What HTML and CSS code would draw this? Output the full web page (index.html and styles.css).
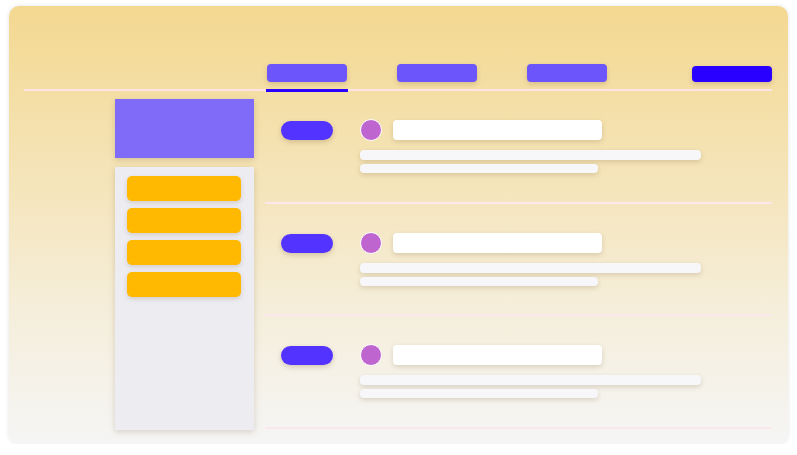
FILE: index.html
```html
<!DOCTYPE html>
<html lang="en">
<head>
    <meta charset="UTF-8">
    <meta name="viewport" content="width=device-width, initial-scale=1.0">
    <title>Feed Wireframe</title>
    <link rel="stylesheet" href="styles.css">
</head>
<body>

    <div class="card">

        <!-- Top navigation -->
        <div class="topbar">
            <div class="tab active"><span class="tab-bar"></span></div>
            <div class="tab"><span class="tab-bar"></span></div>
            <div class="tab"><span class="tab-bar"></span></div>
            <div class="action-btn"></div>
        </div>

        <div class="layout">

            <!-- Sidebar -->
            <div class="sidebar">
                <div class="sidebar-head"></div>
                <div class="sidebar-panel">
                    <div class="menu-item"></div>
                    <div class="menu-item"></div>
                    <div class="menu-item"></div>
                    <div class="menu-item"></div>
                </div>
            </div>

            <!-- Feed rows -->
            <div class="feed">
                <div class="row">
                    <div class="entry">
                        <div class="pill"></div>
                        <div class="post">
                            <div class="post-head">
                                <span class="avatar"></span>
                                <span class="title"></span>
                            </div>
                            <div class="line long"></div>
                            <div class="line short"></div>
                        </div>
                    </div>
                </div>
                <div class="row">
                    <div class="entry">
                        <div class="pill"></div>
                        <div class="post">
                            <div class="post-head">
                                <span class="avatar"></span>
                                <span class="title"></span>
                            </div>
                            <div class="line long"></div>
                            <div class="line short"></div>
                        </div>
                    </div>
                </div>
                <div class="row">
                    <div class="entry">
                        <div class="pill"></div>
                        <div class="post">
                            <div class="post-head">
                                <span class="avatar"></span>
                                <span class="title"></span>
                            </div>
                            <div class="line long"></div>
                            <div class="line short"></div>
                        </div>
                    </div>
                </div>
            </div>

        </div>
    </div>

</body>
</html>
```

FILE: styles.css
```css
* {
    box-sizing: border-box;
}
body {
    margin: 0;
    background: #ffffff;
    font-family: "Liberation Sans", Arial, sans-serif;
}
.card {
    margin: 6px 0 0 9px;
    width: 779px;
    height: 438px;
    padding: 0 16px 0 15px;
    border-radius: 10px;
    background: linear-gradient(180deg, #f3d890 0%, #f5e6bf 45%, #f5eedb 70%, #f5f5f5 100%);
    box-shadow: 0 0 4px rgba(0, 0, 0, 0.12);
    overflow: hidden;
}

/* top navigation */
.topbar {
    display: flex;
    align-items: flex-end;
    height: 85px;
    padding-left: 242px;
    border-bottom: 2px solid #fbe4e4;
}
.tab {
    width: 82px;
    padding: 0 1px 7px;
    margin-right: 48px;
}
.tab.active {
    border-bottom: 3px solid #2a00ff;
    margin-bottom: -3px;
}
.tab-bar {
    display: block;
    height: 18px;
    background: #6c56fb;
    border-radius: 4px;
    box-shadow: 0 2px 5px rgba(110, 80, 40, 0.22);
}
.action-btn {
    margin-left: auto;
    margin-bottom: 7px;
    width: 80px;
    height: 16px;
    background: #2900ff;
    border-radius: 4px;
    box-shadow: 0 2px 5px rgba(110, 80, 40, 0.22);
}

.layout {
    display: flex;
    gap: 11px;
}

/* sidebar */
.sidebar {
    width: 139px;
    margin-left: 91px;
    margin-top: 8px;
}
.sidebar-head {
    height: 59px;
    background: #7f6bf8;
    box-shadow: 0 2px 6px rgba(110, 80, 40, 0.22);
}
.sidebar-panel {
    margin-top: 9px;
    height: 263px;
    padding: 9px 13px 0 12px;
    background: #edecf1;
    box-shadow: 0 2px 6px rgba(110, 80, 40, 0.22);
}
.menu-item {
    height: 25px;
    margin-bottom: 7px;
    background: #ffb900;
    border-radius: 5px;
    box-shadow: 0 2px 5px rgba(110, 80, 40, 0.2);
}

/* feed */
.feed {
    flex: 1;
}
.row {
    display: flex;
    align-items: center;
    height: 112.5px;
    padding: 1px 0 0 16px;
    border-bottom: 2px solid #fbe8ec;
}
.entry {
    display: flex;
    align-items: flex-start;
}
.pill {
    width: 52px;
    height: 19px;
    margin-top: 1px;
    margin-right: 27px;
    background: #5333ff;
    border-radius: 10px;
    box-shadow: 0 2px 5px rgba(110, 80, 40, 0.25);
}
.post-head {
    display: flex;
    align-items: center;
    gap: 11px;
    height: 20px;
}
.avatar {
    width: 22px;
    height: 22px;
    border-radius: 50%;
    background: #bf65cf;
    border: 1px solid #ffffff;
}
.title {
    width: 209px;
    height: 20px;
    background: #ffffff;
    border-radius: 4px;
    box-shadow: 0 2px 5px rgba(110, 80, 40, 0.2);
}
.line {
    height: 10px;
    background: #f7f7f9;
    border-radius: 4px;
    box-shadow: 0 2px 5px rgba(110, 80, 40, 0.2);
}
.line.long {
    width: 341px;
    margin-top: 10px;
}
.line.short {
    width: 238px;
    margin-top: 4px;
    height: 9px;
}
```
